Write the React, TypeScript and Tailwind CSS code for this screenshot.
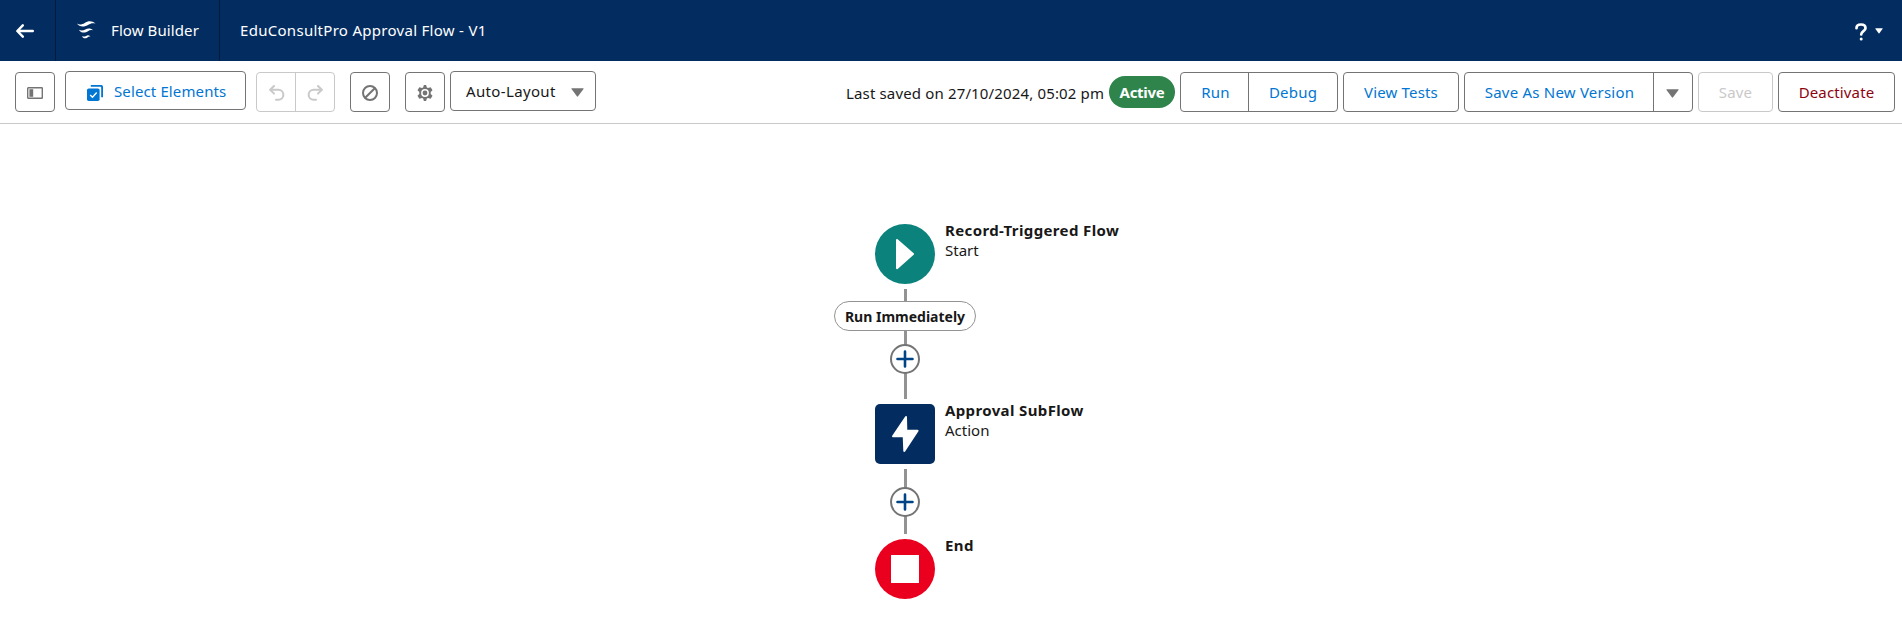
import type { ReactNode } from "react";

const BTN = "flex items-center justify-center h-10 border border-[#747474] rounded bg-white";

function Caret({ className }: { className: string }) {
  return (
    <svg viewBox="0 0 13 9" className={className} fill="currentColor">
      <path d="M.9.2h11.2q.9 0 .4.8L7.100 8.300q-.6.7-1.200 0L.5 1Q0 .2.9.2z" />
    </svg>
  );
}

function UndoIcon({ flip = false }: { flip?: boolean }) {
  return (
    <svg
      viewBox="0 0 16 16"
      className={flip ? "w-4 h-4 -scale-x-100" : "w-4 h-4 ml-0.5"}
      fill="none"
      stroke="currentColor"
      strokeWidth="2"
      strokeLinecap="round"
      strokeLinejoin="round"
    >
      <path d="M5 1 1.200 4.800 5 8.600" />
      <path d="M1.600 4.800h7.800a4.900 4.900 0 0 1 0 9.900H7" />
    </svg>
  );
}

function Header() {
  return (
    <header className="flex h-[61px] bg-[#032d60] text-white items-stretch">
      <div className="w-14 shrink-0 border-r border-[#021b3d] flex items-center">
        <svg viewBox="0 0 18 14" className="ml-4 w-[18px] h-[14px]" fill="none" stroke="white" strokeWidth="2.400" strokeLinecap="round" strokeLinejoin="round">
          <path d="M6.800 1.300 1.300 7 6.800 12.700M1.600 7H16.800" />
        </svg>
      </div>
      <div className="w-[164px] shrink-0 border-r border-[#021b3d] flex items-center">
        <svg viewBox="0 0 20 20" className="ml-5 w-5 h-5" fill="white">
          <path d="M.9 2.500C3.500 4 6 3.500 8.700 1.900 12 0 15.800 -.5 19.500 2.600 16.500 1.700 14.600 2.300 12.400 3.700 8.500 6.300 3.200 6.300 .9 2.500z" />
          <path d="M2.900 8.700C5 9.900 7.200 9.600 9.300 8.500 12 7 14.800 7 17.200 9.400 14.900 8.700 13.500 9.200 12 10.200 9 12.300 4.800 12.200 2.900 8.700z" />
          <path d="M5.800 15C7.300 15.900 8.700 15.600 10.100 14.900 11.700 14.100 13.100 14.100 14.500 15.700 13 15.300 12.300 15.700 11.400 16.400 9.400 18 7 17.500 5.800 15z" />
        </svg>
        <span className="ml-[15px] text-[15px] tracking-[0.1px] whitespace-nowrap">Flow Builder</span>
      </div>
      <span className="ml-5 self-center text-[15px] tracking-[0.29px] whitespace-nowrap">EduConsultPro Approval Flow - V1</span>
      <div className="ml-auto mr-[19px] flex items-center">
        <svg viewBox="0 0 12 18" className="w-3 h-[18px] mt-0.5" fill="none" stroke="white" strokeWidth="2.700" strokeLinecap="round">
          <path d="M1.500 5.200C1.500 2.900 3.300 1.500 6 1.500s4.500 1.500 4.500 3.700c0 3-4.300 2.900-4.300 6.300" />
          <path d="M6.200 15.900v.1" strokeWidth="3" />
        </svg>
        <Caret className="ml-2 w-[8px] h-[6px]" />
      </div>
    </header>
  );
}

function Toolbar() {
  return (
    <div className="flex items-start h-[63px] border-b border-[#c9c9c9] bg-white pl-[15px] pr-[7px] pt-[11px] text-[15px] whitespace-nowrap text-[#0176d3]">
      <button className={`${BTN} w-10`}>
        <svg viewBox="0 0 16 12" className="w-4 h-3 mt-0.5">
          <rect x=".7" y=".7" width="14.600" height="10.600" rx=".6" fill="white" stroke="#747474" strokeWidth="1.400" />
          <rect x="2.400" y="2.200" width="3.800" height="7.600" fill="#747474" />
        </svg>
      </button>
      <button className="-mt-px ml-[10px] flex h-[39px] w-[181px] items-center rounded border border-[#747474] pl-[21px]">
        <svg viewBox="0 0 16 16" className="mt-[5px] w-4 h-4">
          <path d="M3.800 0H14.300Q16 0 16 1.700V12.200H14.200V2.500Q14.200 1.800 13.500 1.800H3.800z" fill="#0176d3" />
          <rect y="3.400" width="12.600" height="12.600" rx="1.700" fill="#0176d3" />
          <path d="m3.200 9.900 2.300 2.300 4.200-4.700" fill="none" stroke="white" strokeWidth="1.400" />
        </svg>
        <span className="ml-[11px] mt-0.5 tracking-[0.12px]">Select Elements</span>
      </button>
      <div className="ml-[10px] flex h-10 w-[79px] rounded border border-[#c9c9c9] text-[#c9c9c9]">
        <button className="flex w-[39px] items-center justify-center border-r border-[#c9c9c9] pt-0.5"><UndoIcon /></button>
        <button className="flex flex-1 items-center justify-center pt-0.5 pr-px"><UndoIcon flip /></button>
      </div>
      <button className={`${BTN} ml-[15px] w-10 text-[#747474]`}>
        <svg viewBox="0 0 16 16" className="w-4 h-4 mt-px" fill="none" stroke="currentColor" strokeWidth="2">
          <circle cx="8" cy="8" r="7" />
          <path d="m3.200 12.800 9.600-9.600" />
        </svg>
      </button>
      <button className={`${BTN} ml-[15px] w-10 text-[#747474]`}>
        <svg viewBox="0 0 16 16" className="w-4 h-4 mt-px" fill="currentColor">
          <path fillRule="evenodd" d="M6.900 0h2.200l.8 2.400 1.100.6L13.700 2.300 15.500 5.200 13.700 7v2l1.800 1.800-1.800 2.900-2.700-.7-1.100.6L9.100 16H6.900l-.8-2.400-1.100-.6-2.700.7L.5 10.800 2.300 9V7L.5 5.200 2.300 2.300l2.700.7 1.100-.6zM8 4.100a3.900 3.900 0 1 0 0 7.800 3.900 3.900 0 0 0 0-7.800z" />
          <circle cx="8" cy="8" r="2.400" />
        </svg>
      </button>
      <button className="-mt-px ml-[5px] flex h-10 w-[146px] items-center justify-between rounded border border-[#747474] pl-[15px] pr-[11px] text-[#181818]">
        <span className="tracking-[0.35px]">Auto-Layout</span>
        <Caret className="mt-[3px] w-[13px] h-[9px] text-[#747474]" />
      </button>

      <span className="ml-auto mt-[10px] w-[263px] tracking-[0.15px] text-[#181818]">Last saved on 27/10/2024, 05:02 pm</span>
      <span className="mt-1 flex h-8 w-[66px] items-center justify-center rounded-full bg-[#2e844a] font-bold tracking-[-0.3px] text-white">Active</span>
      <div className="ml-[5px] flex h-10 w-[158px] rounded border border-[#747474]">
        <button className="w-[68px] border-r border-[#747474] pl-0.5 tracking-[0.2px]">Run</button>
        <button className="flex-1 tracking-[0.2px]">Debug</button>
      </div>
      <button className={`${BTN} ml-[5px] w-[116px] tracking-[0.15px]`}>View Tests</button>
      <div className="ml-[5px] flex h-10 w-[229px] rounded border border-[#747474]">
        <button className="w-[189px] border-r border-[#747474] pl-px tracking-[0.22px]">Save As New Version</button>
        <button className="flex flex-1 items-center justify-center text-[#747474]"><Caret className="mt-[3px] -ml-px w-[13px] h-[9px]" /></button>
      </div>
      <button className="ml-[5px] h-10 w-[75px] rounded border border-[#c9c9c9] tracking-[0.2px] text-[#c9c9c9]">Save</button>
      <button className={`${BTN} ml-[5px] w-[117px] tracking-[0.15px] text-[#8e030f]`}>Deactivate</button>
    </div>
  );
}

function FlowNode({ place, icon, title, kind }: { place: string; icon: ReactNode; title: string; kind?: string }) {
  return (
    <div className={`absolute left-[875px] flex gap-[10px] text-[15px] leading-5 whitespace-nowrap text-[#181818] ${place}`}>
      {icon}
      <div className="-mt-1">
        <div className="font-bold tracking-[0.37px]">{title}</div>
        {kind && <div>{kind}</div>}
      </div>
    </div>
  );
}

function AddButton({ place }: { place: string }) {
  return (
    <button className={`absolute left-[890px] flex h-[30px] w-[30px] items-center justify-center rounded-full border-2 border-[#747474] bg-white ${place}`}>
      <svg viewBox="0 0 18 18" className="w-[18px] h-[18px] shrink-0" stroke="#014486" strokeWidth="2.600" strokeLinecap="round">
        <path d="M9 1.500v15M1.500 9h15" />
      </svg>
    </button>
  );
}

export default function App() {
  return (
    <div className="flex h-[632px] w-[1902px] flex-col overflow-hidden bg-white font-['Noto_Sans','Open_Sans',sans-serif]">
      <Header />
      <Toolbar />
      <main className="relative flex-1">
        <div className="absolute left-[904px] top-[165px] h-[110px] w-[3px] bg-[#939393]" />
        <div className="absolute left-[904px] top-[345px] h-[65px] w-[3px] bg-[#939393]" />
        <FlowNode
          place="top-[100px]"
          title="Record-Triggered Flow"
          kind="Start"
          icon={
            <svg viewBox="0 0 60 60" className="w-[60px] h-[60px]">
              <circle cx="30" cy="30" r="30" fill="#0b827c" />
              <path d="M22 16 38 30 22 44.200z" fill="white" stroke="white" strokeWidth="2" strokeLinejoin="round" />
            </svg>
          }
        />
        <div className="absolute left-[834px] top-[177px] flex h-[30px] w-[142px] items-center justify-center rounded-full border border-[#939393] bg-white pt-px text-[14px] font-bold whitespace-nowrap text-[#181818]">
          Run Immediately
        </div>
        <AddButton place="top-[220px]" />
        <FlowNode
          place="top-[280px]"
          title="Approval SubFlow"
          kind="Action"
          icon={
            <svg viewBox="0 0 60 60" className="w-[60px] h-[60px]">
              <rect width="60" height="60" rx="5" fill="#032d60" />
              <path d="M31 13 18 32.200H28.700L29.300 47 42.600 26.800H31.300z" fill="white" stroke="white" strokeWidth="2" strokeLinejoin="round" />
            </svg>
          }
        />
        <AddButton place="top-[363px]" />
        <FlowNode
          place="top-[415px]"
          title="End"
          icon={
            <svg viewBox="0 0 60 60" className="w-[60px] h-[60px]">
              <circle cx="30" cy="30" r="30" fill="#ea001e" />
              <rect x="16" y="16" width="28" height="28" fill="white" />
            </svg>
          }
        />
      </main>
    </div>
  );
}
